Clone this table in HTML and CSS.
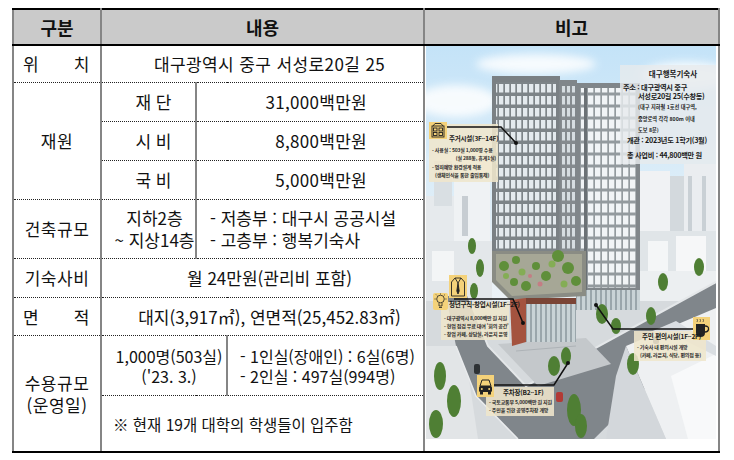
FILE: index.html
```html
<!DOCTYPE html>
<html lang="ko">
<head>
<meta charset="utf-8">
<title>대구행복기숙사</title>
<link rel="stylesheet" href="styles.css">
</head>
<body>
<table class="info">
  <colgroup>
    <col class="c-a"><col class="c-b"><col class="c-c"><col class="c-d"><col class="c-e">
  </colgroup>
  <tr class="r-head">
    <th>구분</th>
    <th colspan="3">내용</th>
    <th>비고</th>
  </tr>
  <tr class="r-loc">
    <td class="lbl"><div class="dist"><span>위</span><span>치</span></div></td>
    <td colspan="3" class="mid addr">대구광역시 중구 서성로20길 25</td>
    <td rowspan="9" class="pic">
      <svg class="scene" viewBox="0 0 290 393" width="290" height="393" xmlns="http://www.w3.org/2000/svg">
        <defs>
          <linearGradient id="sky" x1="0" y1="0" x2="0" y2="1">
            <stop offset="0" stop-color="#c4e3f8"/>
            <stop offset="0.35" stop-color="#dcedf8"/>
            <stop offset="0.7" stop-color="#eef2f5"/>
            <stop offset="1" stop-color="#e4e7ea"/>
          </linearGradient>
          <pattern id="winL" width="6" height="12" patternUnits="userSpaceOnUse">
            <rect width="6" height="12" fill="#7d8488"/>
            <rect x="1" y="2" width="4.3" height="8.5" fill="#e4eaee"/>
          </pattern>
          <pattern id="winM" width="5" height="12" patternUnits="userSpaceOnUse">
            <rect width="5" height="12" fill="#858b8f"/>
            <rect x="1" y="2" width="3" height="8.5" fill="#d6dde1"/>
          </pattern>
          <pattern id="winR" width="7" height="12" patternUnits="userSpaceOnUse">
            <rect width="7" height="12" fill="#939a9e"/>
            <rect x="1" y="1.5" width="5.3" height="9" fill="#f1f4f6"/>
          </pattern>
          <pattern id="glass" width="5" height="40" patternUnits="userSpaceOnUse">
            <rect width="5" height="40" fill="#9aa6ab"/>
            <rect x="1" y="0" width="3" height="40" fill="#c9d3d6"/>
          </pattern>
          <filter id="soft"><feGaussianBlur stdDeviation="4"/></filter>
        </defs>

        <rect width="290" height="393" fill="url(#sky)"/>
        <g fill="#ffffff" opacity="0.85" filter="url(#soft)">
          <ellipse cx="30" cy="55" rx="42" ry="16"/>
          <ellipse cx="110" cy="18" rx="60" ry="10"/>
          <ellipse cx="260" cy="30" rx="45" ry="14"/>
          <ellipse cx="60" cy="115" rx="55" ry="16"/>
        </g>

        <!-- background city left -->
        <g>
          <rect x="0" y="150" width="30" height="60" fill="#e6eaed"/>
          <rect x="8" y="115" width="18" height="45" fill="#d9dfe3"/>
          <rect x="28" y="135" width="36" height="70" fill="#eff2f4"/>
          <rect x="36" y="150" width="6" height="40" fill="#c7cdd2"/>
          <rect x="0" y="195" width="66" height="70" fill="#e3e7ea"/>
          <rect x="6" y="205" width="22" height="30" fill="#f3f5f6"/>
        </g>
        <!-- background city right -->
        <g>
          <rect x="214" y="125" width="30" height="65" fill="#f0f2f4"/>
          <rect x="244" y="130" width="14" height="60" fill="#d3d9dd"/>
          <rect x="258" y="118" width="32" height="72" fill="#eaedf0"/>
          <rect x="262" y="130" width="4" height="55" fill="#c9d0d5"/>
          <rect x="276" y="130" width="4" height="55" fill="#c9d0d5"/>
          <rect x="214" y="185" width="76" height="45" fill="#e0e5e8"/>
          <rect x="222" y="195" width="20" height="30" fill="#f4f6f7"/>
          <rect x="250" y="190" width="30" height="35" fill="#f6f7f8"/>
          <rect x="214" y="225" width="76" height="45" fill="#eceff1"/>
        </g>

        <!-- ground -->
        <rect x="0" y="255" width="290" height="138" fill="#d6dadd"/>
        <polygon points="0,300 38,300 52,393 0,393" fill="#e2e5e7"/>
        <polygon points="20,250 42,250 62,300 100,340 290,236 290,272 168,393 92,393 50,350 30,300" fill="#80868b"/>
        <polyline points="42,250 62,300 100,340 290,236" fill="none" stroke="#e4e7e9" stroke-width="2"/>
        <polyline points="30,300 50,350 92,393" fill="none" stroke="#e9ebed" stroke-width="1.5"/>
        <!-- lower right white buildings -->
        <polygon points="200,300 290,262 290,393 240,393" fill="#eef0f2"/>
        <polygon points="200,300 240,393 180,393 190,330" fill="#d3d7db"/>
        <polygon points="245,330 290,308 290,393 262,393" fill="#f8f9fa"/>
        <polygon points="215,290 250,275 290,300 290,310 250,290" fill="#dadee2"/>

        <!-- plaza in front -->
        <polygon points="72,298 160,292 185,318 112,340" fill="#c4c8cb"/>
        <polyline points="90,305 150,300 M100,315 165,308 M108,326 172,318" fill="none" stroke="#aeb3b7" stroke-width="1"/>

        <!-- towers -->
        <rect x="66" y="30" width="68" height="182" fill="#7a8084"/>
        <rect x="70" y="36" width="60" height="174" fill="url(#winL)"/>
        <rect x="133" y="34" width="18" height="210" fill="#80868a"/>
        <rect x="135" y="40" width="14" height="200" fill="url(#winM)"/>
        <rect x="150" y="37" width="64" height="210" fill="#80868a"/>
        <rect x="154" y="42" width="56" height="200" fill="url(#winR)"/>
        <rect x="158" y="42" width="3" height="205" fill="#6b7175"/>
        <rect x="150" y="244" width="64" height="20" fill="url(#glass)"/>

        <!-- podium & roof garden -->
        <polygon points="66,205 160,205 160,250 84,254 66,236" fill="#8a8c84"/>
        <polygon points="70,208 156,208 156,246 86,250 70,234" fill="#a6a796"/>
        <polygon points="84,254 100,252 100,296 86,300" fill="#a4533f"/>
        <rect x="100" y="252" width="50" height="44" fill="url(#glass)"/>
        <rect x="100" y="252" width="50" height="6" fill="#7a4435"/>
        <g fill="#5f8f3a">
          <circle cx="78" cy="220" r="5"/><circle cx="90" cy="214" r="4"/><circle cx="132" cy="210" r="6"/>
          <circle cx="142" cy="222" r="6"/><circle cx="120" cy="230" r="5"/><circle cx="100" cy="240" r="5"/>
          <circle cx="110" cy="220" r="4"/><circle cx="150" cy="235" r="5"/><circle cx="88" cy="236" r="4"/>
        </g>
        <g fill="#84ad55">
          <circle cx="96" cy="226" r="3.5"/><circle cx="126" cy="218" r="3.5"/><circle cx="138" cy="238" r="3.5"/><circle cx="80" cy="230" r="3"/>
        </g>
        <g fill="#c47d84"><circle cx="114" cy="238" r="2.5"/><circle cx="104" cy="230" r="2"/></g>

        <!-- trees -->
        <g fill="#4f7f34">
          <ellipse cx="46" cy="200" rx="4" ry="8"/><ellipse cx="54" cy="222" rx="4" ry="9"/><ellipse cx="48" cy="245" rx="4" ry="8"/>
          <ellipse cx="14" cy="330" rx="6" ry="14"/><ellipse cx="28" cy="355" rx="7" ry="16"/><ellipse cx="10" cy="378" rx="7" ry="14"/>
          <ellipse cx="128" cy="320" rx="6" ry="10"/><ellipse cx="140" cy="310" rx="5" ry="9"/>
          <ellipse cx="148" cy="364" rx="7" ry="16"/><ellipse cx="155" cy="380" rx="6" ry="12"/>
          <ellipse cx="207" cy="318" rx="6" ry="11"/><ellipse cx="225" cy="270" rx="5" ry="9"/>
          <ellipse cx="237" cy="236" rx="5" ry="9"/><ellipse cx="273" cy="221" rx="5" ry="9"/>
          <ellipse cx="176" cy="268" rx="6" ry="10"/><ellipse cx="190" cy="280" rx="5" ry="8"/>
        </g>
        <rect x="130" y="346" width="7" height="10" rx="2" fill="#b33a35"/>
        <rect x="48" y="318" width="6" height="10" rx="2" fill="#2d3134"/>
        <rect x="227" y="290" width="6" height="8" rx="2" fill="#3a3e41"/>

        <!-- info box -->
        <rect x="194" y="19" width="96" height="99" fill="#e6eaed" opacity="0.82"/>
        <g class="t-info">
          <text x="247" y="31" text-anchor="middle" class="t-title">대구행복기숙사</text>
          <text x="197" y="44" class="t-main">주소 : 대구광역시 중구</text>
          <text x="212" y="53" class="t-main">서성로20길 25(수창동)</text>
          <text x="212" y="63" class="t-small">(대구 지하철 1호선 대구역,</text>
          <text x="212" y="75" class="t-small">중앙로역 각각 800m 이내</text>
          <text x="212" y="86" class="t-small">도보 8분)</text>
          <text x="201" y="97" class="t-main">개관 : 2023년도 1학기(3월)</text>
          <text x="201" y="112" class="t-main">총 사업비 : 44,800백만 원</text>
        </g>

        <!-- label 1: housing -->
        <rect x="3" y="78" width="69" height="58" fill="#efe6cc" opacity="0.88"/>
        <polyline points="20,81 75,81 90,97" fill="none" stroke="#111" stroke-width="1.5"/>
        <circle cx="90" cy="97" r="2" fill="#111"/>
        <rect x="3" y="76" width="18" height="17" fill="#f4d27a"/>
        <g fill="none" stroke="#222" stroke-width="0.9">
          <rect x="6" y="80" width="12" height="11"/>
          <path d="M7 80 L9 77.5 H15 L17 80"/>
          <rect x="7.5" y="82" width="3.5" height="3"/><rect x="13" y="82" width="3.5" height="3"/>
          <rect x="7.5" y="86.5" width="3.5" height="3"/><rect x="13" y="86.5" width="3.5" height="3"/>
        </g>
        <text x="23" y="95" class="t-lab">주거시설(3F~14F)</text>
        <text x="6" y="106" class="t-item">- 사용실 : 503실 1,000명 수용</text>
        <text x="70" y="114" text-anchor="end" class="t-item">(실 288동, 휴게1실)</text>
        <text x="6" y="123" class="t-item">- 범죄예방 환경설계 적용</text>
        <text x="9" y="131" class="t-item">(생체인식을 통한 출입통제)</text>

        <!-- label 2: youth -->
        <rect x="15" y="256" width="68" height="38" fill="#efe6cc" opacity="0.88"/>
        <polyline points="28,253 87,253 97,277" fill="none" stroke="#111" stroke-width="1.5"/>
        <circle cx="97" cy="277" r="2" fill="#111"/>
        <rect x="23" y="229" width="18" height="23" fill="#f4d27a"/>
        <g fill="none" stroke="#222" stroke-width="0.9">
          <path d="M25.5 250 V236 L29 232 H35 L38.5 236 V250 Z"/>
          <path d="M29 232 L32 237 L35 232"/>
          <path d="M32 237 L30.8 245 L32 248 L33.2 245 Z" fill="#222"/>
        </g>
        <rect x="7" y="247" width="15" height="17" rx="2" fill="#f4d27a"/>
        <g fill="none" stroke="#222" stroke-width="0.8">
          <circle cx="14.5" cy="253" r="3.8"/>
          <path d="M13 257 V260 H16 V257 M13 261.5 H16"/>
          <path d="M8.5 253 H9.6 M19.4 253 H20.5 M10 248.5 L10.8 249.3 M19 248.5 L18.2 249.3 M14.5 247.5 V248.4"/>
        </g>
        <text x="23" y="261" class="t-lab">청년구직·창업시설(1F~2F)</text>
        <text x="18" y="274" class="t-item">- 대구광역시 8,000백만 원 지원</text>
        <text x="18" y="282" class="t-item">- 현업 점검 무료 대여 '회의 공간'</text>
        <text x="18" y="290" class="t-item">- 창업 카페, 상담실, 라운지 운영</text>

        <!-- label 3: community -->
        <rect x="208" y="285" width="72" height="30" fill="#efe6cc" opacity="0.88"/>
        <polyline points="268,283 187,283 170,259" fill="none" stroke="#111" stroke-width="1.5"/>
        <circle cx="170" cy="259" r="2" fill="#111"/>
        <rect x="267" y="271" width="17" height="23" fill="#f4d27a"/>
        <g fill="none" stroke="#333" stroke-width="0.7">
          <path d="M271 276 q1 -1.5 0 -3 M274 276 q1 -1.5 0 -3 M277 276 q1 -1.5 0 -3"/>
        </g>
        <path d="M270 278 H279 V287 Q279 291 274.5 291 Q270 291 270 287 Z" fill="#222"/>
        <path d="M279 280 Q283 280 282.5 283.5 Q282 286 279 286" fill="none" stroke="#222" stroke-width="1.3"/>
        <text x="216" y="293" class="t-lab">주민 편의시설(1F~2F)</text>
        <text x="211" y="303" class="t-item">- 기숙사 내 편의시설 개방</text>
        <text x="214" y="311" class="t-item">(카페, 라운지, 식당, 편의점 등)</text>

        <!-- label 4: parking -->
        <rect x="60" y="341" width="68" height="29" fill="#efe6cc" opacity="0.88"/>
        <polyline points="66,339 128,339 142,317" fill="none" stroke="#111" stroke-width="1.5"/>
        <circle cx="142" cy="317" r="2" fill="#111"/>
        <rect x="51" y="329" width="17" height="22" fill="#f4d27a"/>
        <g fill="#222">
          <path d="M54 340 L56 334 H63 L65 340 Z" fill="none" stroke="#222" stroke-width="1"/>
          <rect x="53" y="340" width="13" height="6" rx="1.5"/>
          <rect x="54" y="346" width="3" height="2.5"/><rect x="62" y="346" width="3" height="2.5"/>
        </g>
        <circle cx="55.8" cy="343" r="1" fill="#f4d27a"/><circle cx="63.2" cy="343" r="1" fill="#f4d27a"/>
        <text x="77" y="349" class="t-lab">주차장(B2~1F)</text>
        <text x="63" y="358" class="t-item">- 국토교통부 5,000백만 원 지원</text>
        <text x="63" y="366" class="t-item">- 주민을 위한 공영주차장 개방</text>
      </svg>
    </td>
  </tr>
  <tr class="r-fund">
    <td rowspan="3" class="lbl">재원</td>
    <td class="sub">재 단</td>
    <td colspan="2" class="amt">31,000백만원</td>
  </tr>
  <tr class="r-fund">
    <td class="sub">시 비</td>
    <td colspan="2" class="amt">8,800백만원</td>
  </tr>
  <tr class="r-fund">
    <td class="sub">국 비</td>
    <td colspan="2" class="amt">5,000백만원</td>
  </tr>
  <tr class="r-build">
    <td class="lbl">건축규모</td>
    <td class="floors">지하2층<br>~ 지상14층</td>
    <td colspan="2" class="list">- 저층부 : 대구시 공공시설<br>- 고층부 : 행복기숙사</td>
  </tr>
  <tr class="r-fee">
    <td class="lbl">기숙사비</td>
    <td colspan="3" class="mid">월 24만원(관리비 포함)</td>
  </tr>
  <tr class="r-area">
    <td class="lbl"><div class="dist"><span>면</span><span>적</span></div></td>
    <td colspan="3" class="mid">대지(3,917㎡), 연면적(25,452.83㎡)</td>
  </tr>
  <tr class="r-cap1">
    <td rowspan="2" class="lbl cap-lbl">수용규모<br>(운영일)</td>
    <td colspan="2" class="cap">1,000명(503실)<br>('23. 3.)</td>
    <td class="rooms">- 1인실(장애인) : 6실(6명)<br>- 2인실 : 497실(994명)</td>
  </tr>
  <tr class="r-cap2">
    <td colspan="3" class="note">※ 현재 19개 대학의 학생들이 입주함</td>
  </tr>
</table>
</body>
</html>
```
FILE: styles.css
```css
html, body {
  margin: 0;
  padding: 0;
  background: #ffffff;
}

body {
  font-family: "Noto Sans CJK KR", "Noto Sans", sans-serif;
  color: #111111;
}

.info {
  margin: 8px 0 0 12px;
  width: 706px;
  border-collapse: collapse;
  table-layout: fixed;
  font-size: 17px;
}

.c-a { width: 88px; }
.c-b { width: 95px; }
.c-c { width: 31px; }
.c-d { width: 197px; }
.c-e { width: 295px; }

.info th,
.info td {
  border-top: 1px dotted #222;
  border-bottom: 1px dotted #222;
  border-left: 2px solid #858585;
  border-right: 2px solid #858585;
  padding: 0;
  text-align: center;
  vertical-align: middle;
  line-height: 22px;
  font-weight: 400;
  white-space: nowrap;
}

.info .r-head th {
  background: #cacaca;
  border-top: 2px solid #000;
  border-bottom: 2px solid #000;
  font-weight: 700;
  font-size: 18px;
  height: 34px;
}

.r-loc td { height: 36px; }
.r-fund td { height: 38px; }
.r-build td { height: 58px; }
.r-fee td { height: 38px; }
.r-area td { height: 37px; }
.r-cap1 td { height: 59px; }
.r-cap2 td { height: 55px; }

.info .r-cap2 td,
.info td.cap-lbl,
.info td.pic { border-bottom: 2px solid #000; }

.info td.lbl { letter-spacing: 0.5px; }

.dist {
  display: flex;
  justify-content: space-between;
  padding: 0 10px 0 9px;
}

.info td.mid { padding-left: 14px; }

.info td.addr { letter-spacing: 0.4px; }

.info td.sub { padding-left: 10px; }

.info td.floors { padding-left: 12px; }

.info td.amt {
  text-align: right;
  padding-right: 56px;
  letter-spacing: 0.3px;
}

.info td.list {
  text-align: left;
  padding-left: 13px;
}

.info td.cap { padding-left: 10px; line-height: 20px; font-size: 16px; }

.info td.rooms { text-align: left; padding-left: 12px; line-height: 20px; font-size: 16px; }

.info td.note {
  text-align: left;
  padding-left: 11px;
  font-size: 15.5px;
}

.info td.pic {
  vertical-align: top;
  padding: 0;
  overflow: hidden;
}

.scene {
  display: block;
  margin-left: 1px;
}

.t-info text { font-family: "Noto Sans CJK KR", sans-serif; font-weight: 700; fill: #1a1a1a; }
.t-title { font-size: 7.5px; }
.t-main { font-size: 7.2px; letter-spacing: -0.3px; }
.t-small { font-size: 5.2px; }
.t-lab { font-family: "Noto Sans CJK KR", sans-serif; font-size: 6.5px; font-weight: 700; fill: #1a1a1a; letter-spacing: -0.2px; }
.t-item { font-family: "Noto Sans CJK KR", sans-serif; font-size: 5px; font-weight: 700; fill: #2a2a2a; letter-spacing: -0.2px; }
```
